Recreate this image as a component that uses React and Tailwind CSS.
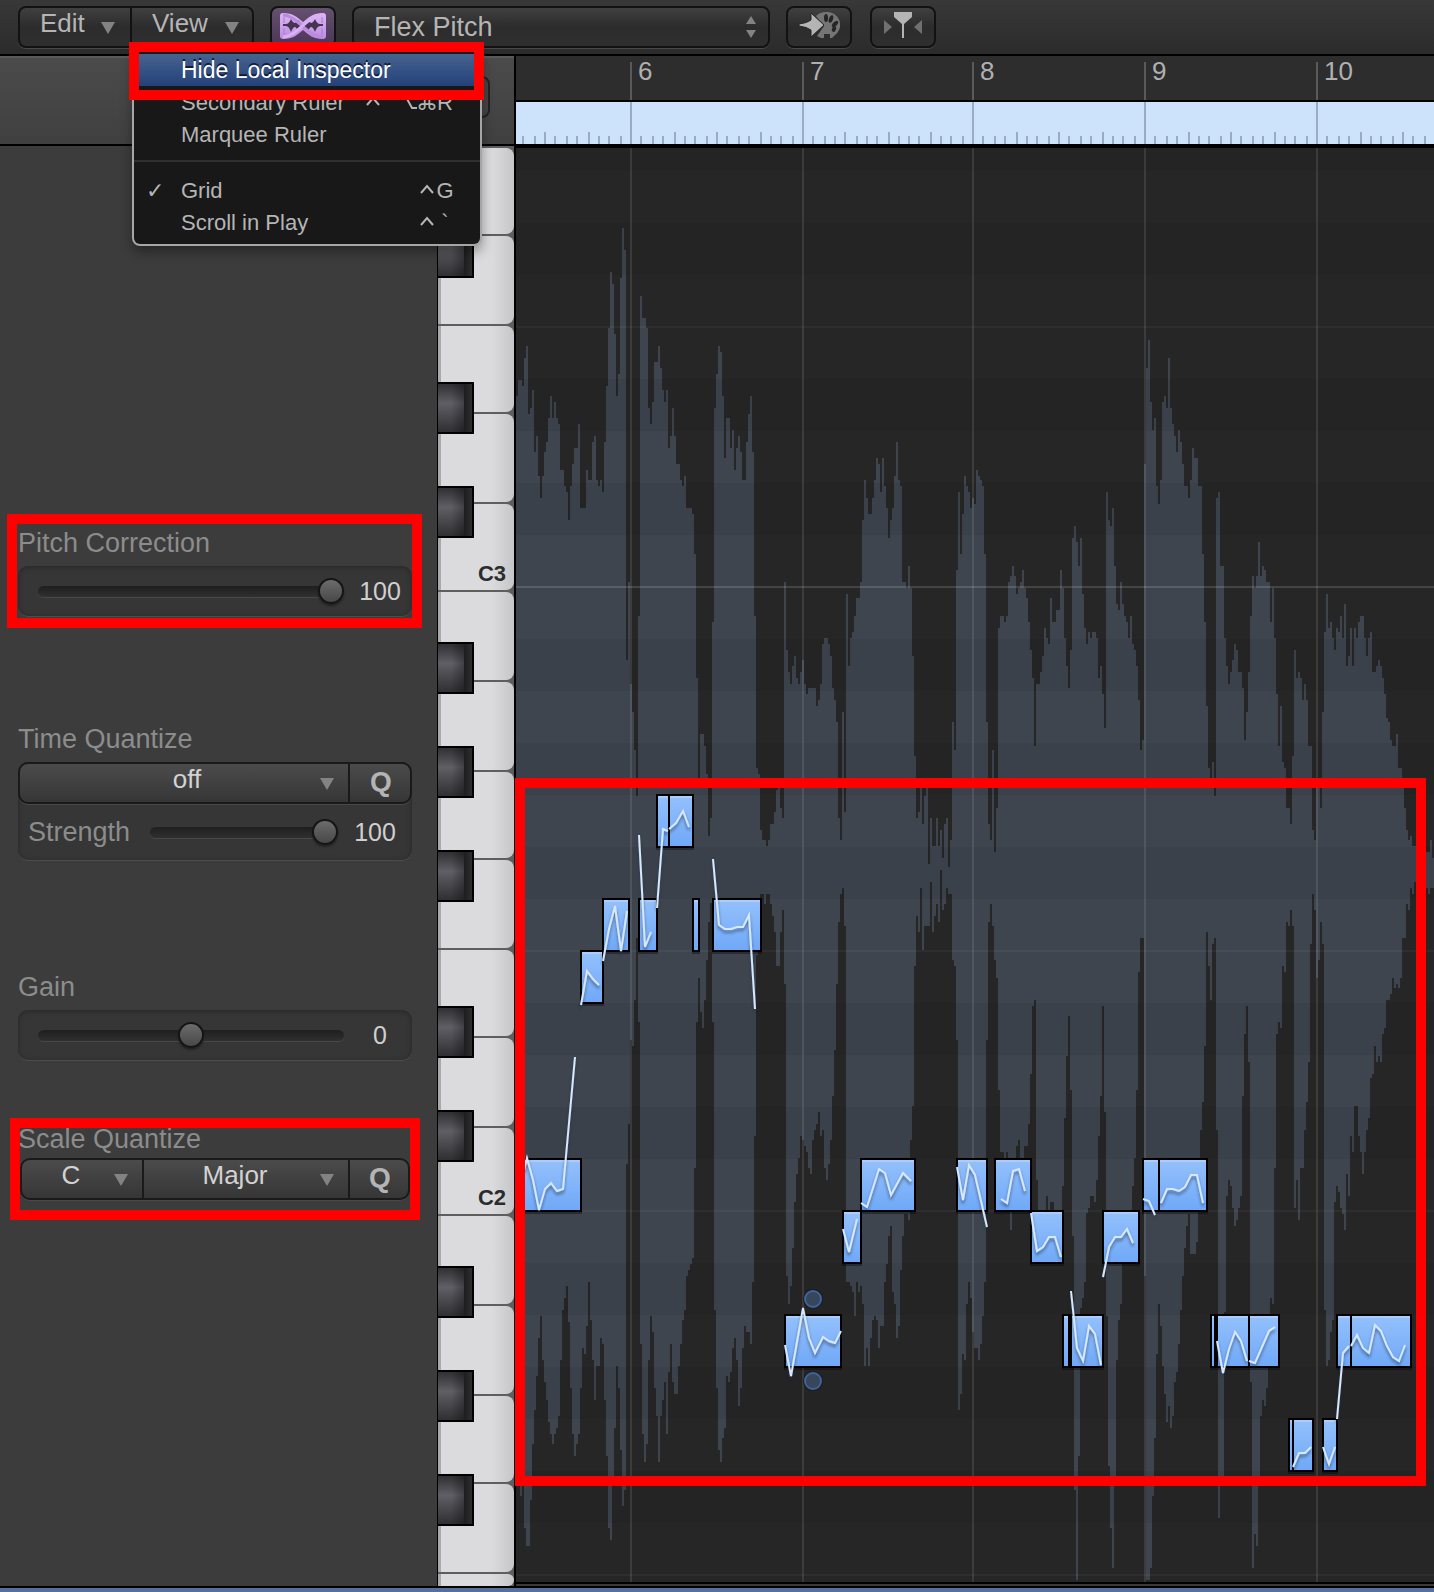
import React from "react";

const ORIGIN_X = 516;
const ORIGIN_Y = 148;
const GRID_WIDTH = 918;
const GRID_HEIGHT = 1434;
const LANE = 52;

const BARS = [
  { label: "6", x: 630, width: "w-[172px]" },
  { label: "7", x: 802, width: "w-[170px]" },
  { label: "8", x: 972, width: "w-[172px]" },
  { label: "9", x: 1144, width: "w-[172px]" },
  { label: "10", x: 1316, width: "flex-1" },
];

// Peak envelopes: each row is a start x and one y per two-pixel column.
const UPPER = [
  [516, "396 380 380 386 358 346 414 408 390 452 436 476 498 476 452 442 418"],
  [550, "396 418 402 418 424 470 470 486 492 520 486 464 448 448 424"],
  [580, "508 508 508 470 480 480 442 436 480 486 480 492 442 386 328"],
  [610, "272 284 334 396 374 278 228 250 660 582 684 712 750 796 616"],
  [640, "296 318 318 328 408 424 402 362 362 346 368 390 402 390 448 436 408 436 464 464 480 486 476"],
  [686, "508 508 508 514 554 678 785 734 734 746 774 836 818 622"],
  [714, "408 374 346 352 396 458 418 418 448 430 470 448 436 452 480 480 442 414 396 452 616 768 774"],
  [760, "830 840 840 846 840 824 824 812 790 785 808 818"],
  [784, "582 650 672 684 666 656 678 684 672 660 684 694 688 688 688 688 706 700 684 644 638 638 644 656 688 700 722 818 840 712 812"],
  [846, "594 666 638 632 616 598 598 582 520 480 498 514 514 498 480 458 464 492 458 486 508 538 520 508 476 442 480 486"],
  [902, "582 582 588 566 588 656 756 818 812 785 824 796 785 864 818 846 846 818 846 830 858 824 818 867 840"],
  [952, "722 750 570 492 554 514 476 486 492 508 498 504 470 476 480 486 554 722 824 840 750 852 808"],
  [998, "628 616 616 622 616 582 576 566 576 594 588 582 570 588 598 622 650 678 746 684 684 672 656 628 638 644"],
  [1050, "598 622 622 610 610 570 588 638 666 688 650 538 526 542 566 538 594 628 644 632 638 632 632 638 678 666 694 728"],
  [1106, "492 520 526 508 566 604 610 582 604 616 622 638 616 644 650 666 700 750 740"],
  [1144, "464 368 340 402 430 418 486 504 480 402 396 408 358 408 424 436 452 430 442 464 486 486 498 480 448 458 458 486 486 554 622 706 768 785 762 796"],
  [1216, "498 492 566 566 638 666 684 672 660 644 650 672 672 688 740 712 672 616 576 588 576 542 576 566 570 582 582 622 588 638 694 746 706 762 768 808 808 824"],
  [1292, "756 650 678 672 678 700 684 700 746 746 830 840 785 785 808"],
  [1322, "712 632 594 628 622 638 650 628 632 616 638 604 666 656 628 666 628 638 622 616 616 638 656 638 632"],
  [1372, "672 672 666 660 666 678 694 718 722 740 746 746 734 768 768 780 808 830 840 836 846"],
  [1414, "846 846 846 846 846 846 852 852 840 858"],
];

const LOWER = [
  [516, "1480 1480 1496 1480 1528 1546 1546 1500 1444 1410 1376 1338 1316 1360 1382 1400 1422"],
  [550, "1434 1444 1434 1428 1416 1360 1310 1298 1286 1322 1388 1434 1456 1444 1434 1388 1348 1354 1326 1282 1320 1360 1400"],
  [596, "1366 1366 1338 1344 1400 1456 1528 1540 1480 1428 1366 1388 1450 1506 1490 1164 1124 1040 1046 1000 938 1022"],
  [640, "1344 1434 1462 1444 1360 1316 1332 1388 1416 1462 1416 1400 1382 1434 1372 1344 1382 1394 1394 1366 1344 1320 1310"],
  [686, "1276 1270 1264 1258 1168 1022 978 1012 1028 1000 960 922 903 1022"],
  [714, "1310 1388 1450 1462 1438 1428 1376 1382 1372 1348 1338 1360 1406 1388 1348 1326 1332 1332 1344 1282 1136 955 950"],
  [760, "894 894 904 894 894 904 916 932 966 966 932 910 984"],
  [786, "1276 1304 1286 1248 1202 1174 1158 1136 1140 1146 1152 1168 1174 1140 1130 1124 1112 1136 1130 1168 1180 1164 1140 1096 1050 984 922 894 888 926"],
  [846, "1282 1282 1286 1292 1316 1282 1292 1286 1304 1366 1348 1366 1338 1320 1316 1320 1348 1326 1326 1282 1264 1236 1226"],
  [892, "1292 1304 1338 1326 1270 1236 1214 1214 1220 1140 1106 966 916 932 888 950 926 926 926 882 932 916 904 922 870 910 904 888 894 894 960 966 1040"],
  [958, "1410 1394 1354 1360 1304 1282 1298 1332 1348 1348 1360 1344 1316 1282 1040 922 904 926 960 978 1090"],
  [1000, "1152 1152 1158 1152 1170 1230 1160 1160 1146 1140 1158 1158 1146 1146 1124 1074 1006 1000"],
  [1036, "1180 1210 1210 1210 1210 1196 1210 1202 1202 1210 1210 1210 1210 1186 1118 1056 1016 1090"],
  [1072, "1236 1490 1580 1456 1308 1298 1282 1213 1208 1196 1196 1202 1180 1136 1096 1006 1112"],
  [1106, "1316 1466 1528 1568 1476 1360 1320 1304 1262 1262 1250 1240 1210 1186 1158 1090 972 938 938"],
  [1144, "1276 1580 1580 1568 1496 1438 1354 1304 1326 1366 1394 1422 1406 1428 1416 1382 1372 1344 1310 1276 1248 1226 1214"],
  [1190, "1254 1254 1254 1242 1200 1130 1102 1046 932 966 1000 944 938 1130"],
  [1218, "1518 1476 1476 1312 1196 1180 1186 1208 1226 1220 1208 1196 1096 1034 1006 1062"],
  [1250, "1382 1568 1534 1546 1476 1416 1400 1406 1388 1366 1298 1304 1168 1034 1022 1028 966 972 922 926 910 926"],
  [1294, "1208 1180 1220 1168 1168 1130 1102 1062 944 894 910 978 960 922 944"],
  [1324, "1310 1366 1360 1332 1320 1202 1186 1192 1208 1214 1230 1174 1196 1136 1152 1106 1106 1136 1152 1174 1152"],
  [1366, "1130 1118 1078 1074 1046 1062 1056 1062 1034 1028 1000 1000 994 978 988 984 988 978 938 938 904 910 888 894 882"],
  [1416, "882 882 882 882 882 888 894 888 888"],
];

const columns = (rows) =>
  rows.flatMap(([start, values]) => values.split(" ").map((y, i) => [start + i * 2, Number(y)]));

const wavePath = (() => {
  const top = columns(UPPER).map(([x, y]) => `L${x} ${y}H${x + 2}`).join("");
  const bottom = columns(LOWER).reverse().map(([x, y]) => `L${x + 2} ${y}H${x}`).join("");
  return `M516 870${top}${bottom}Z`;
})();

// Tops of the lanes that belong to black keys.
const DARK_LANES = [119, 223, 379, 483, 639, 743, 847, 1003, 1107, 1263, 1367, 1471];

// [left, right, top, inner dividers as left/width pairs]
const NOTES = [
  [656, 694, 794, [[668, 2]]],
  [602, 630, 898, []],
  [638, 658, 898, []],
  [692, 700, 898, []],
  [712, 762, 898, []],
  [580, 604, 950, []],
  [514, 582, 1158, []],
  [860, 916, 1158, []],
  [956, 988, 1158, []],
  [994, 1032, 1158, []],
  [1142, 1208, 1158, [[1158, 2]]],
  [842, 862, 1210, []],
  [1030, 1064, 1210, []],
  [1102, 1140, 1210, []],
  [784, 842, 1314, []],
  [1062, 1104, 1314, [[1068, 4]]],
  [1210, 1280, 1314, [[1214, 4], [1248, 2]]],
  [1336, 1412, 1314, [[1350, 2]]],
  [1288, 1314, 1418, [[1292, 2]]],
  [1322, 1338, 1418, []],
];

const CURVES = [
  "639,835 645,947 651,932",
  "657,908 663,829 668,831",
  "669,829 676,823 683,811 689,827",
  "713,859 719,925 725,929 731,929 737,927 743,927 749,915 755,1009",
  "603,961 609,929 615,906 621,951 627,911",
  "581,1005 587,971 593,979 599,985",
  "524,1170 527,1158 533,1180 539,1210 545,1189 551,1183 557,1191 563,1189 575,1057",
  "785,1345 791,1376 803,1308 809,1338 815,1353 823,1337 829,1341 835,1343 841,1331",
  "843,1229 849,1252 857,1219",
  "861,1203 867,1207 879,1169 885,1173 891,1195 903,1173 911,1181",
  "957,1167 963,1200 969,1165 975,1175 987,1227",
  "1001,1199 1007,1203 1013,1171 1019,1169 1025,1191",
  "1031,1213 1037,1251 1043,1247 1049,1237 1055,1237 1061,1257",
  "1071,1291 1077,1348 1083,1361 1089,1326 1095,1334 1101,1365",
  "1103,1277 1109,1247 1115,1237 1121,1237 1127,1229 1133,1243",
  "1143,1199 1149,1201 1155,1215",
  "1161,1203 1167,1189 1173,1189 1179,1191 1185,1187 1191,1175 1197,1175 1203,1203",
  "1217,1341 1223,1373 1229,1349 1235,1332 1241,1341 1247,1361",
  "1249,1361 1255,1363 1269,1331 1275,1327",
  "1293,1467 1299,1453 1305,1453 1311,1447",
  "1323,1447 1329,1464 1335,1447",
  "1337,1419 1343,1353 1349,1346",
  "1351,1346 1357,1335 1363,1348 1369,1353 1375,1325 1381,1331 1387,1346 1393,1357 1399,1361 1405,1345",
];

const WHITE_KEYS = [86, 88, 86, 88, 86, 88, 88, 86, 88, 86, 88, 86, 88, 88, 86, 88, 12];
const KEY_LABELS = { 4: "C3", 11: "C2" };
const BLACK_KEYS = [80, 236, 340, 496, 600, 704, 860, 964, 1120, 1224, 1328];

const raised =
  "rounded-lg border-2 border-[#121212] bg-linear-to-b from-[#404040] via-[#2c2c2c] to-[#2f2f2f] shadow-[0_1px_0_#484848]";
const field =
  "rounded-[10px] border-2 border-[#1a1a1a] bg-linear-to-b from-[#4b4b4b] to-[#363636] shadow-[0_1px_0_#484848]";
const well =
  "rounded-[10px] bg-[#363636] shadow-[inset_0_1px_5px_#262626,0_1px_0_#4c4c4c]";
const mark = "pointer-events-none absolute z-20 border-[10px] border-[#ff0000]";

function Triangle({ className }) {
  return (
    <svg viewBox="0 0 14 12" className={`h-3 w-[14px] shrink-0 fill-[#838383] ${className || ""}`} aria-hidden="true">
      <path d="M0 0h14L7 12z" />
    </svg>
  );
}

function Dropdown({ label, value, className, textClass, arrowClass }) {
  return (
    <div className={`relative ${className}`}>
      <select
        aria-label={label}
        defaultValue={value}
        className={`h-full w-full appearance-none bg-transparent pb-2 text-[26px] leading-[30px] text-[#d2d2d2] outline-none [text-align-last:center] ${textClass}`}
      >
        <option>{value}</option>
      </select>
      <Triangle className={`pointer-events-none absolute top-[14px] ${arrowClass}`} />
    </div>
  );
}

function Slider({ id, value, min = 0, max = 100, className }) {
  return (
    <input
      id={id}
      type="range"
      min={min}
      max={max}
      defaultValue={value}
      className={`h-[26px] appearance-none bg-transparent outline-none [&::-webkit-slider-runnable-track]:h-[11px] [&::-webkit-slider-runnable-track]:rounded-full [&::-webkit-slider-runnable-track]:bg-linear-to-b [&::-webkit-slider-runnable-track]:from-[#1f1f1f] [&::-webkit-slider-runnable-track]:to-[#303030] [&::-webkit-slider-runnable-track]:shadow-[0_1px_0_#484848] [&::-webkit-slider-thumb]:mt-[-8px] [&::-webkit-slider-thumb]:size-[26px] [&::-webkit-slider-thumb]:appearance-none [&::-webkit-slider-thumb]:rounded-full [&::-webkit-slider-thumb]:border-2 [&::-webkit-slider-thumb]:border-[#151515] [&::-webkit-slider-thumb]:bg-linear-to-b [&::-webkit-slider-thumb]:from-[#6c6c6c] [&::-webkit-slider-thumb]:to-[#484848] [&::-webkit-slider-thumb]:shadow-[0_2px_2px_#222] ${className}`}
    />
  );
}

function QButton({ label, className }) {
  return (
    <button
      type="button"
      aria-label={label}
      className={`border-l-2 border-[#1a1a1a] pb-[2px] pl-[2px] text-[28px] leading-8 font-bold text-[#b4b4b4] ${className}`}
    >
      Q
    </button>
  );
}

const labelClass = "block text-[27px] leading-[30px] text-[#8c8c8c]";
const valueClass = "flex-1 text-center text-[25px] leading-8 text-[#cfcfcf]";

const KEY_SHAPES = {
  "^": { name: "Control", path: "M2 11l6-7 6 7" },
  "⌥": { name: "Option", path: "M0 3h5l6 11h5M10 3h6" },
};

function MenuItem({ label, keys = [], checked, active }) {
  return (
    <button
      type="button"
      role="menuitem"
      className={
        active
          ? "flex h-8 w-full items-center bg-linear-to-b from-[#46628f] to-[#24427a] text-left text-[23px] text-white [text-shadow:0_-2px_0_#111a30]"
          : "flex h-8 w-full items-center text-left text-[22px] text-[#b5b5b5]"
      }
    >
      <span className="w-[47px] shrink-0 pl-3 font-['DejaVu_Sans'] text-[22px] font-bold">{checked ? "✓" : ""}</span>
      <span className="flex-1 whitespace-nowrap">{label}</span>
      <span className="flex pr-[26px]">
        {keys.map((key, i) => (
          <span key={i} className="flex w-[18px] items-center justify-center font-['Liberation_Sans','DejaVu_Sans']">
            {KEY_SHAPES[key] ? (
              <svg viewBox="0 0 16 16" className="size-4" role="img" aria-label={KEY_SHAPES[key].name}>
                <path d={KEY_SHAPES[key].path} fill="none" stroke="currentColor" strokeWidth="2" />
              </svg>
            ) : (
              key
            )}
          </span>
        ))}
      </span>
    </button>
  );
}

function Toolbar() {
  return (
    <header className="flex h-14 items-start gap-4 border-b-2 border-black bg-linear-to-b from-[#383838] to-[#2b2b2b] pt-[6px] pl-[18px]">
      <div className={`flex h-[42px] w-[236px] ${raised}`}>
        <button type="button" className="flex w-[110px] items-center pl-5 text-[26px] text-[#b5b5b5]">
          <span className="flex-1 pb-2 text-left leading-8">Edit</span>
          <Triangle className="mt-[2px] mr-[15px]" />
        </button>
        <div className="relative flex flex-1 border-l-2 border-[#121212]">
          <button type="button" aria-expanded="true" className="flex flex-1 items-center pl-5 text-[26px] text-[#b5b5b5]">
            <span className="flex-1 pb-2 text-left leading-8">View</span>
            <Triangle className="mt-[2px] mr-[13px]" />
          </button>
          <div
            role="menu"
            className="absolute top-[44px] left-0 z-10 w-[350px] rounded-b-lg border-2 border-t-0 border-[#a6a6a6] bg-[#181818] pt-[2px] pb-[6px] shadow-[0_6px_12px_rgba(0,0,0,0.35)]"
          >
            <MenuItem label="Hide Local Inspector" active />
            <MenuItem label="Secondary Ruler" keys={["^", " ", "⌥", "⌘", "R"]} />
            <MenuItem label="Marquee Ruler" />
            <div role="separator" className="mt-[10px] mb-3 h-[2px] bg-[#303030]" />
            <MenuItem label="Grid" keys={["^", "G"]} checked />
            <MenuItem label="Scroll in Play" keys={["^", "`"]} />
            <div className={`${mark} top-[-10px] -left-[5px] h-[58px] w-[355px]`} />
          </div>
        </div>
      </div>

      <button
        type="button"
        aria-label="Flex"
        className="flex h-[42px] w-[66px] items-start justify-center rounded-lg border-2 border-[#121212] bg-linear-to-b from-[#66506f] to-[#4b3658] pt-1"
      >
        <svg viewBox="0 0 48 28" className="h-7 w-12" aria-hidden="true">
          <defs>
            <linearGradient id="flex" x1="0" y1="0" x2="0" y2="1">
              <stop offset="0" stopColor="#dcb6f5" />
              <stop offset="1" stopColor="#bb8de0" />
            </linearGradient>
          </defs>
          <path
            d="M4 1C14 1 18 5 24 10C30 5 34 1 44 1Q47 1 47 4V24Q47 27 44 27C34 27 30 23 24 18C18 23 14 27 4 27Q1 27 1 24V4Q1 1 4 1Z"
            fill="url(#flex)"
          />
          <path d="M4 12h3Q10 12 12 7Q14 11 16 11Q17 11 19 8L24 14L19 19Q17 15 16 15Q14 15 12 20Q10 14 7 14H4zM44 12h-3Q38 12 36 7Q34 11 32 11Q31 11 29 8L24 14L29 19Q31 15 32 15Q34 15 36 20Q38 14 41 14H44z" fill="#463450" />
          <path d="M4 3C18 3 28 25 44 25" fill="none" stroke="#b98ade" strokeWidth="3" />
          <path d="M4 25C18 25 28 3 44 3" fill="none" stroke="#d9b0f5" strokeWidth="3" />
          <path d="M5 5V11M43 5V11M5 16V23M43 16V23" stroke="#a87acb" strokeWidth="1" />
        </svg>
      </button>

      <div className={`relative h-[42px] w-[418px] ${raised}`}>
        <select
          aria-label="Flex mode"
          defaultValue="Flex Pitch"
          className="h-full w-full appearance-none bg-transparent pl-5 text-[27px] leading-8 text-[#b5b5b5] outline-none"
        >
          <option>Flex Pitch</option>
        </select>
        <svg viewBox="0 0 10 22" className="pointer-events-none absolute top-2 right-3 h-[22px] w-[10px] fill-[#838383]" aria-hidden="true">
          <path d="M0 8L5 0l5 8zM0 14h10l-5 8z" />
        </svg>
      </div>

      <button type="button" aria-label="MIDI In" className={`flex h-[42px] w-[66px] items-start justify-center pt-1 ${raised}`}>
        <svg viewBox="0 0 42 28" className="h-7 w-[42px]" aria-hidden="true">
          <path
            d="M28 0A13 13 0 0 1 36 24L34 26H32V22H26V26H23L19 24L26 14L18 4Q22 0 28 0Z"
            fill="#757575"
          />
          <g fill="#262626">
            <ellipse cx="28" cy="6" rx="2" ry="4" />
            <ellipse cx="33" cy="7" rx="2" ry="4" transform="rotate(20 33 7)" />
            <ellipse cx="37" cy="12" rx="2" ry="4" transform="rotate(45 37 12)" />
            <ellipse cx="36" cy="17" rx="2" ry="3" transform="rotate(20 36 17)" />
          </g>
          <path d="M1 12Q9 11 13 8V1L26 13L13 25V18Q9 15 1 14Z" fill="#b4b4b4" stroke="#262626" strokeWidth="1" />
        </svg>
      </button>

      <button type="button" aria-label="Catch playhead" className={`ml-[2px] flex h-[42px] w-[66px] items-start justify-center pt-1 ${raised}`}>
        <svg viewBox="0 0 40 28" className="h-7 w-10" aria-hidden="true">
          <path d="M1 8l8 7-8 7zM39 8l-8 7 8 7z" fill="#707070" />
          <path d="M11 0h18v5l-8 7v14h-2V12l-8-7z" fill="#b4b4b4" />
        </svg>
      </button>
    </header>
  );
}

function Inspector() {
  return (
    <section aria-label="Inspector" className="min-w-0 flex-1 bg-[#3c3c3c] px-[18px] pt-[382px]">
      <div className="relative w-[394px]">
        <label htmlFor="pitch" className={labelClass}>Pitch Correction</label>
        <div className={`mt-2 flex h-[50px] items-center pl-5 ${well}`}>
          <Slider id="pitch" value={100} className="w-[306px]" />
          <output htmlFor="pitch" className={`pl-1 ${valueClass}`}>100</output>
        </div>
        <div className={`${mark} -top-[14px] -left-[11px] h-[114px] w-[415px]`} />
      </div>

      <div className="mt-[108px] w-[394px]">
        <span className={labelClass}>Time Quantize</span>
        <div className={`mt-2 h-[98px] ${well}`}>
          <div className={`flex h-[42px] ${field}`}>
            <Dropdown label="Time Quantize" value="off" className="flex-1" textClass="pl-[6px]" arrowClass="right-[14px]" />
            <QButton label="Quantize time" className="w-[62px]" />
          </div>
          <div className="flex items-center pt-3 pl-[10px]">
            <label htmlFor="strength" className={`${labelClass} w-[122px]`}>Strength</label>
            <Slider id="strength" value={100} className="w-[188px]" />
            <output htmlFor="strength" className={valueClass}>100</output>
          </div>
        </div>
      </div>

      <div className="mt-[112px] w-[394px]">
        <label htmlFor="gain" className={labelClass}>Gain</label>
        <div className={`mt-2 flex h-[50px] items-center pl-5 ${well}`}>
          <Slider id="gain" value={0} min={-50} max={50} className="w-[306px]" />
          <output htmlFor="gain" className={`pl-1 ${valueClass}`}>0</output>
        </div>
      </div>

      <div className="relative mt-16 w-[394px]">
        <span className={labelClass}>Scale Quantize</span>
        <div className={`mx-[2px] mt-1 flex h-[42px] ${field}`}>
          <Dropdown label="Scale root" value="C" className="w-[120px]" textClass="pr-[22px]" arrowClass="right-[14px]" />
          <Dropdown label="Scale" value="Major" className="flex-1 border-l-2 border-[#1a1a1a]" textClass="pr-[22px]" arrowClass="right-[14px]" />
          <QButton label="Quantize scale" className="w-[60px]" />
        </div>
        <div className={`${mark} -top-[6px] -left-2 h-[102px] w-[410px]`} />
      </div>
    </section>
  );
}

function Piano() {
  return (
    <div aria-label="Keyboard" className="relative flex w-[79px] shrink-0 flex-col gap-[2px] overflow-hidden border-r-2 border-l border-black bg-[#5e5e5e] pt-[2px]">
      {WHITE_KEYS.map((height, i) => (
        <div
          key={i}
          style={{ height }}
          className="flex shrink-0 items-end justify-end rounded-r-lg border-l-[3px] border-[#a9a9a9] bg-linear-to-r from-[#dbdbdd] from-70% to-[#c6c6c9] pr-2 pb-[2px] text-[22px] leading-7 font-bold text-[#2c2c2c]"
        >
          {KEY_LABELS[i]}
        </div>
      ))}
      {BLACK_KEYS.map((top) => (
        <div
          key={top}
          style={{ top }}
          className="absolute left-0 flex h-[52px] w-9 border-2 border-l-0 border-black bg-linear-to-b from-[#303034] via-[#5f5f65] via-40% to-[#303034]"
        >
          <div className="flex-1 bg-linear-to-r from-transparent from-50% to-black/30" />
          <div className="w-2 bg-linear-to-r from-[#1d1d1d] to-[#2e2e2e]" />
        </div>
      ))}
    </div>
  );
}

function Ruler() {
  const ticks = [];
  const edges = [458, ...BARS.map((b) => b.x), 1488];
  for (let b = 0; b < edges.length - 1; b++) {
    for (let i = 0; i < 16; i++) {
      const x = edges[b] + Math.round(((edges[b + 1] - edges[b]) * i) / 32) * 2 - ORIGIN_X;
      if (x < 0) continue;
      const height = i === 0 ? 42 : i % 4 === 0 ? 12 : 8;
      ticks.push(<rect key={`${b}-${i}`} x={x} y={42 - height} width="2" height={height} />);
    }
  }
  return (
    <div className="h-[92px] border-b-4 border-black">
      <div className="flex h-[46px] border-b-2 border-black bg-[#2d2d2d] pt-[6px] pl-[114px]">
        {BARS.map((bar) => (
          <div key={bar.label} className={`border-l-2 border-[#5a5a5a] pl-[6px] text-[26px] leading-[18px] text-[#b0b0b0] ${bar.width}`}>
            {bar.label}
          </div>
        ))}
      </div>
      <div className="h-[42px] overflow-hidden bg-[#cde3fc]">
        <svg viewBox="0 0 918 42" preserveAspectRatio="xMinYMin slice" className="h-[42px] w-full fill-[#9aabc4]" aria-hidden="true">
          {ticks}
        </svg>
      </div>
    </div>
  );
}

function PitchEditor() {
  return (
    <div className="relative bg-[#262626]">
      <svg
        viewBox={`${ORIGIN_X} ${ORIGIN_Y} ${GRID_WIDTH} ${GRID_HEIGHT}`}
        preserveAspectRatio="xMinYMin slice"
        className="block h-[1434px] w-full"
        role="img"
        aria-label="Pitch curve and notes"
      >
        <defs>
          <linearGradient id="note" x1="0" y1="0" x2="0" y2="1">
            <stop offset="0" stopColor="#95c1fc" />
            <stop offset="1" stopColor="#6fa8f7" />
          </linearGradient>
          <filter id="drop" x="-20%" y="-20%" width="140%" height="150%">
            <feDropShadow dx="0" dy="3" stdDeviation="1.5" floodColor="#1c2c48" floodOpacity="0.6" />
          </filter>
        </defs>
        <path d={wavePath} fill="#3e454e" />
        {DARK_LANES.map((y) => (
          <rect key={y} x={ORIGIN_X} y={y} width={GRID_WIDTH} height={LANE} fill="#000" fillOpacity="0.05" />
        ))}
        {BARS.map((bar) => (
          <rect key={bar.x} x={bar.x} y={ORIGIN_Y} width="2" height={GRID_HEIGHT} fill="#fff" fillOpacity="0.1" />
        ))}
        {[326, 950, 1210, 1574].map((y) => (
          <rect key={y} x={ORIGIN_X} y={y} width={GRID_WIDTH} height="2" fill="#fff" fillOpacity="0.04" />
        ))}
        <rect x={ORIGIN_X} y="586" width={GRID_WIDTH} height="2" fill="#fff" fillOpacity="0.14" />
        {NOTES.map(([left, right, top, dividers]) => (
          <g key={`${left}-${top}`}>
            <rect x={left} y={top + 2} width={right - left} height="54" fill="#000" fillOpacity="0.35" />
            <rect x={left + 1} y={top + 1} width={right - left - 2} height="52" fill="url(#note)" stroke="#000" strokeWidth="2" />
            <rect x={left + 2} y={top + 2} width={right - left - 4} height="2" fill="#a9cdfd" />
            {dividers.map(([x, width]) => (
              <rect key={x} x={x} y={top + 2} width={width} height="50" fill="#000" />
            ))}
          </g>
        ))}
        {[1299, 1381].map((y) => (
          <g key={y}>
            <circle cx="813" cy={y} r="10" fill="#1a1c20" />
            <circle cx="813" cy={y} r="8" fill="#37465b" stroke="#40639a" strokeWidth="2" />
          </g>
        ))}
        <g fill="none" stroke="#d6e8fe" strokeWidth="2" filter="url(#drop)">
          {CURVES.map((points) => (
            <polyline key={points} points={points} />
          ))}
        </g>
      </svg>
      <div className={`${mark} top-[630px] right-2 -left-px h-[708px]`} />
    </div>
  );
}

export default function App() {
  return (
    <div className="flex flex-col overflow-hidden bg-[#3c3c3c] font-['Liberation_Sans',Arial,sans-serif]">
      <Toolbar />
      <main className="flex">
        <div className="flex w-[516px] shrink-0 flex-col">
          <div className="flex h-[90px] justify-end border-r-2 border-b-2 border-black bg-linear-to-b from-[#4b4b4b] to-[#404040] pt-5 pr-6 shadow-[inset_0_2px_0_#5a5a5a]">
            <button type="button" aria-label="Catch" className="h-[42px] w-[66px] rounded-lg border-2 border-[#222] bg-[#444]" />
          </div>
          <div className="flex flex-1">
            <Inspector />
            <Piano />
          </div>
        </div>
        <div className="min-w-0 flex-1">
          <Ruler />
          <PitchEditor />
          <div className="h-1 border-t-2 border-black bg-[#3a3a3a]" />
        </div>
      </main>
      <footer className="h-[6px] border-t-2 border-black bg-[#56709c]" />
    </div>
  );
}
